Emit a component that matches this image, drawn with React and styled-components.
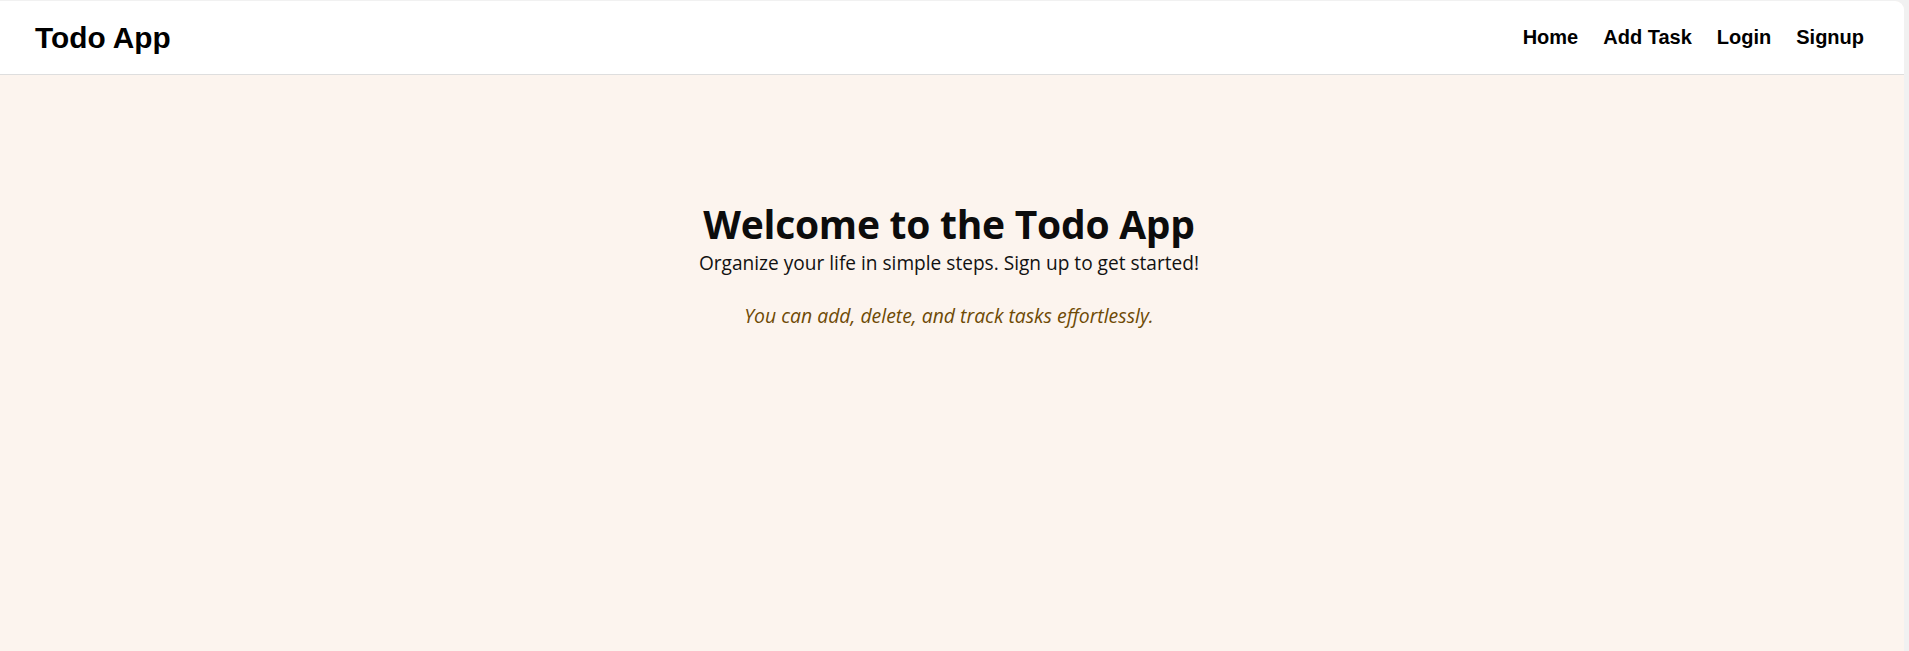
import React from 'react'
import styled, { createGlobalStyle } from 'styled-components'

const GlobalStyle = createGlobalStyle`
    html, body {
        margin: 0;
        padding: 0;
        background-color: #F1F1F1;
    }

    * {
        box-sizing: border-box;
    }
`

const Page = styled.div`
    margin: 1px 5px 0 0;
    min-height: calc(100vh - 1px);
    display: flex;
    flex-direction: column;
    background-color: #FCF4EE;
    border-top-right-radius: 9px;
    overflow: hidden;
`

const HeaderContainer = styled.header`
    background-color: #FFFFFF;
    height: 74px;
    padding: 0 40px 0 35px;
    display: flex;
    align-items: center;
    justify-content: space-between;
    border-bottom: 1px solid #DEDEDE;
    font-family: "Liberation Sans", Arial, sans-serif;
`

const Logo = styled.div`
    font-size: 29.8px;
    font-weight: 700;
    color: #000000;
`

const Nav = styled.nav`
    display: flex;
    align-items: center;
    gap: 25px;
`

const NavLink = styled.a`
    font-size: 20px;
    font-weight: 700;
    color: #000000;
    text-decoration: none;

    &:hover {
        cursor: pointer;
    }
`

const Main = styled.main`
    flex: 1;
    padding: 125px 6px 0 0;
    text-align: center;
    font-family: "Open Sans", "Noto Sans", sans-serif;
`

const Title = styled.h1`
    margin: 0;
    font-size: 39px;
    line-height: 48px;
    font-weight: 700;
    letter-spacing: -0.25px;
    color: #0C0C0C;
`

const Subtitle = styled.p`
    margin: 1.5px 0 0;
    font-size: 19.1px;
    color: #111111;
`

const Note = styled.p`
    margin: 26px 0 0;
    font-size: 19.4px;
    font-style: italic;
    color: #6E4A05;
`

function App() {
    const links = ['Home', 'Add Task', 'Login', 'Signup']

    return (
        <Page>
            <GlobalStyle />
            <HeaderContainer>
                <Logo>Todo App</Logo>
                <Nav>
                    {links.map((link) => (
                        <NavLink key={link}>{link}</NavLink>
                    ))}
                </Nav>
            </HeaderContainer>

            <Main>
                <Title>Welcome to the Todo App</Title>
                <Subtitle>Organize your life in simple steps. Sign up to get started!</Subtitle>
                <Note>You can add, delete, and track tasks effortlessly.</Note>
            </Main>
        </Page>
    )
}

export default App
